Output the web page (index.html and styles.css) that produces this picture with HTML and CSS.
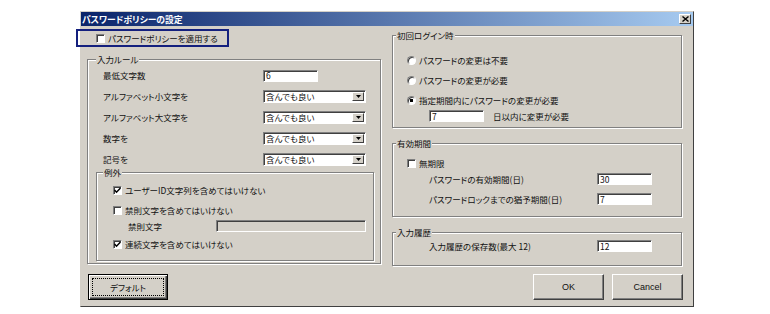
FILE: index.html
```html
<!DOCTYPE html>
<html lang="ja">
<head>
<meta charset="utf-8">
<title>パスワードポリシーの設定</title>
<link rel="stylesheet" href="styles.css">
</head>
<body>
<div class="dialog">
  <div class="titlebar">
    <span class="title">パスワードポリシーの設定</span>
    <span class="close"><svg width="7" height="6" viewBox="0 0 7 6"><path d="M0.5 0.5 L6.5 5.5 M6.5 0.5 L0.5 5.5" stroke="#000" stroke-width="1.4"/></svg></span>
  </div>
  <div class="body">
    <div class="cols">
      <div class="col-left">
        <div class="apply"><span class="cb"></span><span>パスワードポリシーを適用する</span></div>
        <fieldset class="group rules">
          <legend>入力ルール</legend>
          <div class="row"><span class="lbl">最低文字数</span><span class="edit w55">6</span></div>
          <div class="row"><span class="lbl">アルファベット小文字を</span><span class="combo"><span class="ctext">含んでも良い</span><span class="drop"><svg width="5" height="3" viewBox="0 0 5 3"><path d="M0 0 H5 L2.5 3 Z" fill="#000"/></svg></span></span></div>
          <div class="row"><span class="lbl">アルファベット大文字を</span><span class="combo"><span class="ctext">含んでも良い</span><span class="drop"><svg width="5" height="3" viewBox="0 0 5 3"><path d="M0 0 H5 L2.5 3 Z" fill="#000"/></svg></span></span></div>
          <div class="row"><span class="lbl">数字を</span><span class="combo"><span class="ctext">含んでも良い</span><span class="drop"><svg width="5" height="3" viewBox="0 0 5 3"><path d="M0 0 H5 L2.5 3 Z" fill="#000"/></svg></span></span></div>
          <div class="row"><span class="lbl">記号を</span><span class="combo"><span class="ctext">含んでも良い</span><span class="drop"><svg width="5" height="3" viewBox="0 0 5 3"><path d="M0 0 H5 L2.5 3 Z" fill="#000"/></svg></span></span></div>
          <fieldset class="group exc">
            <legend>例外</legend>
            <div class="crow"><span class="cb"><svg width="7" height="7" viewBox="0 0 7 7"><path d="M0.5 3 L2.5 5.2 L6.5 1" stroke="#000" stroke-width="1.5" fill="none"/></svg></span><span>ユーザーID文字列を含めてはいけない</span></div>
            <div class="crow"><span class="cb"></span><span>禁則文字を含めてはいけない</span></div>
            <div class="krow"><span class="klbl">禁則文字</span><span class="edit disabled w150"></span></div>
            <div class="crow last"><span class="cb"><svg width="7" height="7" viewBox="0 0 7 7"><path d="M0.5 3 L2.5 5.2 L6.5 1" stroke="#000" stroke-width="1.5" fill="none"/></svg></span><span>連続文字を含めてはいけない</span></div>
          </fieldset>
        </fieldset>
      </div>
      <div class="col-right">
        <fieldset class="group first">
          <legend>初回ログイン時</legend>
          <div class="crow"><span class="radio"></span><span>パスワードの変更は不要</span></div>
          <div class="crow"><span class="radio"></span><span>パスワードの変更が必要</span></div>
          <div class="crow"><span class="radio on"></span><span>指定期間内にパスワードの変更が必要</span></div>
          <div class="irow"><span class="edit w55">7</span><span class="after">日以内に変更が必要</span></div>
        </fieldset>
        <fieldset class="group valid">
          <legend>有効期間</legend>
          <div class="crow short"><span class="cb"></span><span>無期限</span></div>
          <div class="frow r2"><span class="flbl">パスワードの有効期間(日)</span><span class="edit w55">30</span></div>
          <div class="frow r3"><span class="flbl">パスワードロックまでの猶予期間(日)</span><span class="edit w55">7</span></div>
        </fieldset>
        <fieldset class="group hist">
          <legend>入力履歴</legend>
          <div class="frow"><span class="flbl">入力履歴の保存数(最大 12)</span><span class="edit w55">12</span></div>
        </fieldset>
      </div>
    </div>
    <div class="buttons">
      <button class="btn default"><span>デフォルト</span></button>
      <span class="spacer"></span>
      <button class="btn latin">OK</button>
      <button class="btn latin">Cancel</button>
    </div>
  </div>
</div>
</body>
</html>
```
FILE: styles.css
```css
* { box-sizing: border-box; }
body {
  margin: 0;
  background: #fff;
  font-family: "Noto Sans CJK JP", "Noto Sans", sans-serif;
  font-size: 8.5px;
  line-height: 11px;
  color: #111;
  font-feature-settings: "palt";
}
.dialog {
  margin: 11px 0 0 80px;
  width: 614px;
  height: 296px;
  background: #d4d0c8;
  border: 1px solid;
  border-color: #d4d0c8 #404040 #404040 #d4d0c8;
  display: flex;
  flex-direction: column;
}
.titlebar {
  height: 14px;
  background: linear-gradient(to right, #0a246a, #a6caf0);
  display: flex;
  align-items: center;
  justify-content: space-between;
  padding: 0 2px 0 1px;
}
.title { color: #fff; font-weight: bold; font-size: 8.8px; }
.close {
  width: 12px;
  height: 10px;
  background: #d4d0c8;
  border: 1px solid;
  border-color: #fff #404040 #404040 #fff;
  display: flex;
  align-items: center;
  justify-content: center;
}
.close svg { display: block; }
.body {
  padding: 0 10px 0 6px;
  display: flex;
  flex-direction: column;
}
.cols {
  display: flex;
  align-items: flex-start;
  gap: 11px;
}
.col-left { width: 294px; display: flex; flex-direction: column; }
.col-right { width: 290px; margin-top: 4px; display: flex; flex-direction: column; }

.apply {
  margin: 3px 0 0 -11px;
  width: 153px;
  height: 18px;
  border: 2px solid #14207e;
  display: flex;
  align-items: center;
  gap: 3px;
  padding-left: 18px;
}

.group {
  margin: 0;
  min-width: 0;
  border: 1px solid #808080;
  box-shadow: inset 1px 1px #fff, 1px 1px #fff;
}
.group legend {
  padding: 0 1px;
  line-height: 11px;
  background: #d4d0c8;
}
.rules { margin-top: 7px; padding: 0 6px 2px 8px; }
.rules > legend { margin-left: 0; }
.row { height: 21px; display: flex; align-items: center; }
.lbl { width: 167px; padding-left: 7px; }

.exc { margin-top: -3px; padding: 2px 6px 6px 16px; }
.exc > legend { margin-left: -10px; }
.crow { height: 20px; display: flex; align-items: center; gap: 3px; }
.crow.last { margin-top: 2px; }
.krow { height: 12px; display: flex; align-items: center; }
.klbl { width: 103px; padding-left: 15px; }

.cb {
  width: 9px;
  height: 9px;
  flex: none;
  background: #fff;
  border: 1px solid;
  border-color: #808080 #fff #fff #808080;
  box-shadow: inset 1px 1px #404040;
  display: flex;
  align-items: center;
  justify-content: center;
}
.cb svg { display: block; }
.radio {
  width: 9px;
  height: 9px;
  flex: none;
  border-radius: 50%;
  background: #fff;
  border: 1px solid;
  border-color: #808080 #fff #fff #808080;
  box-shadow: inset 1px 1px #404040;
}
.radio.on { background: radial-gradient(circle, #000 1.4px, #fff 2px); }

.edit {
  height: 12px;
  display: flex;
  align-items: center;
  padding-left: 2px;
  background: #fff;
  border: 1px solid;
  border-color: #808080 #fff #fff #808080;
  box-shadow: inset 1px 1px #404040;
  flex: none;
}
.edit.disabled { background: #d4d0c8; }
.w55 { width: 55px; }
.w150 { width: 150px; }

.combo {
  width: 103px;
  height: 13px;
  display: flex;
  align-items: stretch;
  background: #fff;
  border: 1px solid;
  border-color: #808080 #fff #fff #808080;
  box-shadow: inset 1px 1px #404040;
  padding: 1px 1px 1px 2px;
}
.ctext { flex: 1; display: flex; align-items: center; }
.drop {
  width: 12px;
  background: #d4d0c8;
  border: 1px solid;
  border-color: #fff #404040 #404040 #fff;
  display: flex;
  align-items: center;
  justify-content: center;
}
.drop svg { display: block; }

.first { padding: 9px 6px 5px 14px; }
.first > legend, .valid > legend, .hist > legend { margin-left: -11px; }
.irow { height: 12px; display: flex; align-items: center; padding-left: 22px; }
.after { margin-left: 9px; }

.valid { margin-top: 10px; padding: 6px 6px 11px 14px; }
.crow.short { height: 16px; }
.frow { height: 12px; display: flex; align-items: center; padding-left: 22px; }
.frow.r2 { margin-top: 2px; }
.frow.r3 { margin-top: 8px; }
.flbl { width: 168px; }

.hist { margin-top: 10px; padding: 2px 6px 13px 14px; }

.buttons {
  margin-top: 8px;
  height: 26px;
  display: flex;
  gap: 8px;
}
.spacer { flex: 1; }
.btn {
  margin: 0;
  height: 26px;
  font: inherit;
  color: #111;
  background: #d4d0c8;
  border: 1px solid;
  border-color: #fff #404040 #404040 #fff;
  box-shadow: inset -1px -1px #808080;
  padding: 0;
}
.btn.latin {
  width: 71px;
  font-family: "Liberation Sans", Arial, sans-serif;
  font-size: 9px;
}
.btn.default {
  width: 80px;
  margin-left: 1px;
  border: 1px solid #000;
  box-shadow: inset 1px 1px #fff, inset -1px -1px #404040, inset -2px -2px #808080;
  padding: 3px;
  display: flex;
}
.btn.default span {
  flex: 1;
  display: flex;
  align-items: center;
  justify-content: center;
  border: 1px dotted #000;
}
```
